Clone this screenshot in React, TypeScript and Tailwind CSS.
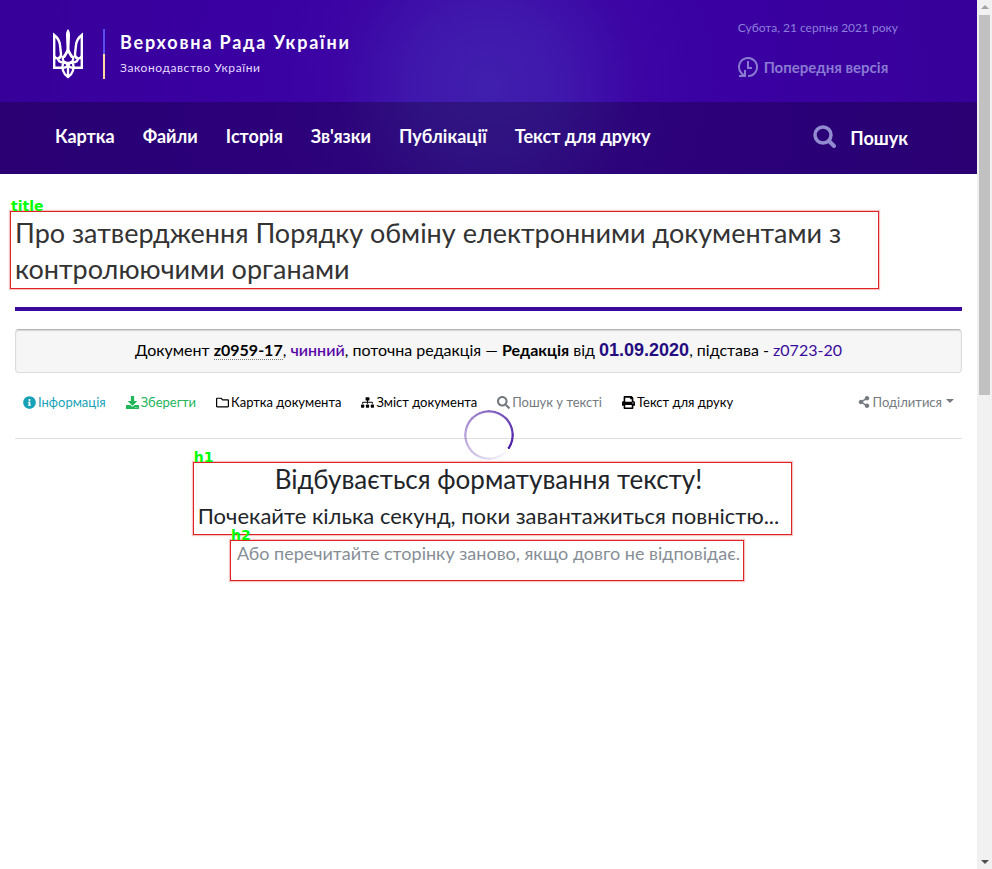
import React from "react";
import {
  FaInfoCircle,
  FaDownload,
  FaRegFolder,
  FaSitemap,
  FaSearch,
  FaPrint,
  FaShareAlt,
} from "react-icons/fa";

const navItems = ["Картка", "Файли", "Історія", "Зв'язки", "Публікації", "Текст для друку"];

const tools = [
  { label: "Інформація", Icon: FaInfoCircle, color: "text-[#17a2b8]" },
  { label: "Зберегти", Icon: FaDownload, color: "text-[#20b558]" },
  { label: "Картка документа", Icon: FaRegFolder, color: "text-black" },
  { label: "Зміст документа", Icon: FaSitemap, color: "text-black" },
  { label: "Пошук у тексті", Icon: FaSearch, color: "text-[#747a80]" },
  { label: "Текст для друку", Icon: FaPrint, color: "text-black" },
];

function Trident() {
  return (
    <svg viewBox="0 0 32 50" className="h-[50px] w-8" fill="none" stroke="white" strokeWidth="2.4" aria-hidden="true">
      <path d="M16 0c-1.600 2-2.200 4-2 7l.5 12c0 4-3 6-4.500 10h3c1-2 2-3 3-5 1 2 2 3 3 5h3c-1.500-4-4.500-6-4.500-10l.5-12c.2-3-.4-5-2-7z" fill="white" stroke="none" />
      <path d="M2.200 39.500V6c4 3 5.800 7 6 12l.8 7c.2 2.500-.8 4-3 4.300-2 .2-3.200-.6-3.600-2.300M29.800 39.500V6c-4 3-5.800 7-6 12l-.8 7c-.2 2.500.8 4 3 4.300 2 .2 3.200-.6 3.600-2.300" />
      <path d="M1 38.800h10.500c2.500 0 4.500-2 4.500-4.800M31 38.800H20.500c-2.500 0-4.500-2-4.500-4.800M11 27c-1 5 1 7 5 7s6-2 5-7" />
      <path d="M6 29c0 3 2 4.500 5.500 4.500 2.500 0 4.500 1 4.500 4v11M26 29c0 3-2 4.500-5.500 4.500-2.500 0-4.500 1-4.500 4M11 34c-1.500 5 0 11 5 14 5-3 6.500-9 5-14" />
    </svg>
  );
}

function HistoryIcon() {
  return (
    <svg viewBox="0 0 20 20" className="size-5" fill="none" stroke="currentColor" strokeWidth="2" aria-hidden="true">
      <path d="M10 19A9 9 0 1 0 3.500 16.200L6.500 19M1 19h6v-6M10 4v7h4" />
    </svg>
  );
}

function SearchGlyph() {
  return (
    <svg viewBox="0 0 23 23" className="mb-1 size-[23px] text-[#938bd0]" fill="none" stroke="currentColor" aria-hidden="true">
      <circle cx="10" cy="10" r="8" strokeWidth="3.5" />
      <path d="M16 16l5 5" strokeWidth="4" strokeLinecap="round" />
    </svg>
  );
}

function Marker({ label, box }: { label: string; box: string }) {
  return (
    <span className={`pointer-events-none absolute border border-[#e02426] shadow-[0_0_1px_1px_#f5c4c4] ${box}`}>
      <span className="absolute bottom-full left-0 font-['DejaVu_Sans',sans-serif] text-sm font-bold leading-[11px] text-[#00ff00]">
        {label}
      </span>
    </span>
  );
}

function Header() {
  return (
    <header className="bg-[#3a00a0] bg-[radial-gradient(circle_at_50%_85px,#411fae_0,#3f16ac_80px,#3c05a4_150px,#3a00a2_240px,#38009a_480px)] text-white">
      <div className="flex h-[102px] items-start justify-between pl-[52px] pr-[79px]">
        <a href="#home" className="mt-[29px] flex items-center">
          <Trident />
          <span className="ml-[19px] flex h-[50px] w-[2px] flex-col">
            <span className="h-1/2 bg-[#5a50f0]" />
            <span className="h-1/2 bg-[#ffd8a0]" />
          </span>
          <span className="ml-[15px] flex flex-col gap-1">
            <span className="text-lg font-bold leading-6 tracking-widest">Верховна Рада України</span>
            <span className="text-xs leading-5 tracking-wider text-[#e6dcff]">Законодавство України</span>
          </span>
        </a>
        <div className="mt-[18px] flex flex-col gap-[19px] text-[#8e7fdc]">
          <time dateTime="2021-08-21" className="text-xs leading-5">Субота, 21 серпня 2021 року</time>
          <a href="#old" className="flex items-center gap-[6px] text-[15px] font-bold leading-5 text-[#897ad2]">
            <HistoryIcon />
            Попередня версія
          </a>
        </div>
      </div>
      <nav className="flex h-[72px] items-center justify-between bg-black/25 pl-[55px] pr-[69px] text-lg font-bold">
        <ul className="flex gap-7 pb-1">
          {navItems.map((item) => (
            <li key={item}>
              <a href="#nav" className="whitespace-nowrap">{item}</a>
            </li>
          ))}
        </ul>
        <button type="button" className="flex items-center gap-[14px]">
          <SearchGlyph />
          Пошук
        </button>
      </nav>
    </header>
  );
}

function Scrollbar() {
  return (
    <div aria-hidden="true" className="flex w-[15px] shrink-0 flex-col items-center bg-[#f1f1f1]">
      <span className="my-[5px] border-x-4 border-b-4 border-x-transparent border-b-[#a3a3a3]" />
      <span className="mt-px h-[380px] w-[11px] bg-[#c1c1c1]" />
      <span className="mb-[5px] mt-auto border-x-4 border-t-4 border-x-transparent border-t-[#505050]" />
    </div>
  );
}

export default function App() {
  return (
    <div className="flex min-h-screen bg-white font-['Lato','Noto_Sans',sans-serif] text-[#212529]">
      <div className="min-w-0 flex-1">
        <Header />
        <main className="px-[15px] pt-[41px]">
          <div className="relative">
            <h1 className="pr-[88px] text-[27px] leading-9 text-[#333]">
              Про затвердження Порядку обміну електронними документами з контролюючими органами
            </h1>
            <Marker label="title" box="-left-[5px] -top-[4px] -bottom-[2px] right-[83px]" />
          </div>
          <hr className="mt-5 border-0 border-t-4 border-[#3a0a9c]" />
          <p className="mt-[18px] rounded border border-[#dcdcdc] border-t-[#b4b4b4] bg-[#f6f6f6] pb-[10px] pt-2 text-center text-base leading-6 text-black shadow-[inset_0_1px_1px_#d8d8d8]">
            Документ <strong className="border-b border-dotted border-[#777]">z0959-17</strong>,{" "}
            <span className="font-semibold text-[#5a0aa8]">чинний</span>, поточна редакція — <strong>Редакція</strong> від{" "}
            <strong className="font-['Liberation_Sans',sans-serif] text-lg leading-6 text-[#250c80]">01.09.2020</strong>, підстава -{" "}
            <a href="#z0723-20" className="text-[#3a0a9c]">z0723-20</a>
          </p>
          <div className="relative flex items-center justify-between border-b border-[#dfdfdf] px-2 pb-[26px] pt-[19px] text-[13px] leading-5">
            <div className="flex gap-5">
              {tools.map(({ label, Icon, color }) => (
                <button key={label} type="button" className={`flex items-center gap-[2px] whitespace-nowrap ${color}`}>
                  <Icon className="size-[13px]" />
                  {label}
                </button>
              ))}
            </div>
            <button type="button" className="flex items-center gap-[3px] whitespace-nowrap text-[#747a80]">
              <FaShareAlt className="size-3" />
              Поділитися
              <span className="mb-[3px] ml-px border-x-4 border-t-4 border-x-transparent border-t-current" />
            </button>
            <span
              role="status"
              aria-label="Завантаження"
              className="absolute -bottom-[22px] left-1/2 size-[50px] -translate-x-1/2 rounded-full bg-[conic-gradient(from_125deg,transparent_0,#4b1aa5_100%)] [mask:radial-gradient(closest-side,transparent_calc(100%_-_3px),black_calc(100%_-_2px))]"
            />
          </div>
          <div className="mt-[22px] flex flex-col items-center text-center">
            <div className="relative">
              <h2 className="text-[26px] leading-9">Відбувається форматування тексту!</h2>
              <p className="mt-1 text-[22px] leading-[30px]">Почекайте кілька секунд, поки завантажиться повністю...</p>
              <Marker label="h1" box="-left-[5px] -right-[13px] top-px -bottom-[4px]" />
            </div>
            <div className="relative mt-[10px] pb-[15px]">
              <p className="text-lg leading-6 text-[#868e96]">Або перечитайте сторінку заново, якщо довго не відповідає.</p>
              <Marker label="h2" box="-left-[7px] -right-[4px] -top-px -bottom-px" />
            </div>
          </div>
        </main>
      </div>
      <Scrollbar />
    </div>
  );
}
